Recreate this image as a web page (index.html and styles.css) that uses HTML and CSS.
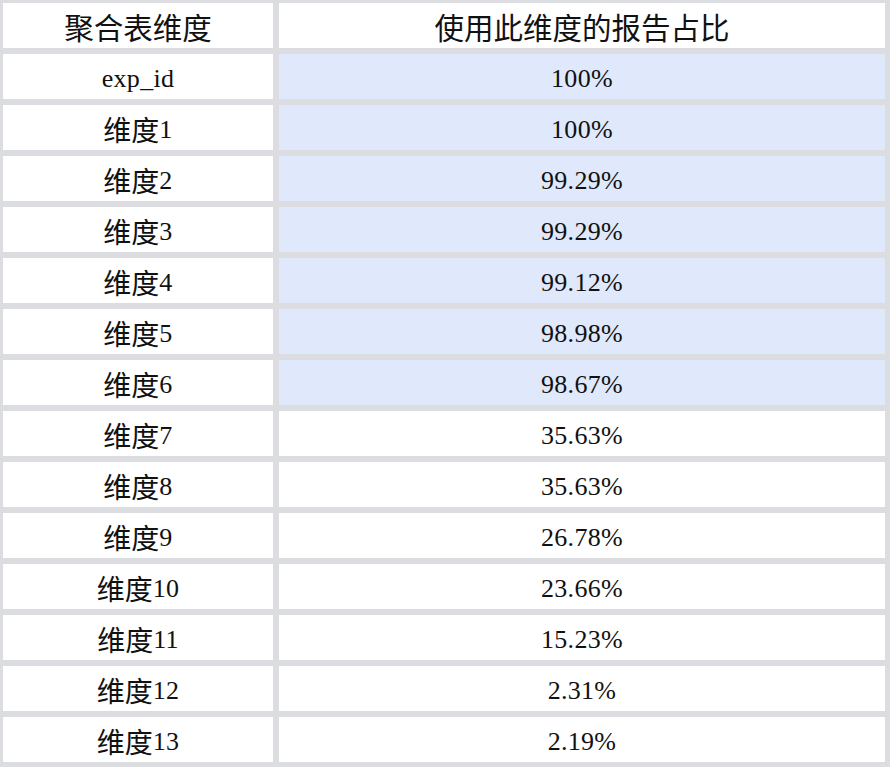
FILE: index.html
```html
<!DOCTYPE html>
<html lang="zh">
<head>
<meta charset="utf-8">
<title>聚合表维度</title>
<link rel="stylesheet" href="styles.css">
</head>
<body>
<div class="table">
  <div class="cell head"><span class="zh">聚合表维度</span></div><div class="cell head"><span class="zh">使用此维度的报告占比</span></div>
  <div class="cell">exp_id</div><div class="cell hl">100%</div>
  <div class="cell"><span class="zh">维度</span>1</div><div class="cell hl">100%</div>
  <div class="cell"><span class="zh">维度</span>2</div><div class="cell hl">99.29%</div>
  <div class="cell"><span class="zh">维度</span>3</div><div class="cell hl">99.29%</div>
  <div class="cell"><span class="zh">维度</span>4</div><div class="cell hl">99.12%</div>
  <div class="cell"><span class="zh">维度</span>5</div><div class="cell hl">98.98%</div>
  <div class="cell"><span class="zh">维度</span>6</div><div class="cell hl">98.67%</div>
  <div class="cell"><span class="zh">维度</span>7</div><div class="cell">35.63%</div>
  <div class="cell"><span class="zh">维度</span>8</div><div class="cell">35.63%</div>
  <div class="cell"><span class="zh">维度</span>9</div><div class="cell">26.78%</div>
  <div class="cell"><span class="zh">维度</span>10</div><div class="cell">23.66%</div>
  <div class="cell"><span class="zh">维度</span>11</div><div class="cell">15.23%</div>
  <div class="cell"><span class="zh">维度</span>12</div><div class="cell">2.31%</div>
  <div class="cell"><span class="zh">维度</span>13</div><div class="cell">2.19%</div>
</div>
</body>
</html>
```
FILE: styles.css
```css
html, body {
  margin: 0;
  padding: 0;
  background: #dcdde1;
}
.table {
  display: grid;
  grid-template-columns: 270px 606px;
  grid-auto-rows: 45px;
  column-gap: 6px;
  row-gap: 6px;
  padding: 3px 5px 5px 3px;
  width: 890px;
  height: 767px;
  box-sizing: border-box;
  background: #dcdde1;
  font-family: "Liberation Serif", "Noto Sans CJK SC", serif;
  font-size: 26px;
  color: #111;
}
.cell {
  background: #ffffff;
  text-align: center;
  box-sizing: border-box;
  height: 45px;
  padding-top: 5px;
  line-height: 40px;
  white-space: nowrap;
  letter-spacing: 0.3px;
}
.cell.hl {
  background: #e0e8fb;
}
.zh {
  font-family: "Noto Sans CJK SC", sans-serif;
  font-size: 28px;
  line-height: 1;
  letter-spacing: 0;
  vertical-align: -3px;
}
.head .zh {
  font-size: 29.5px;
}
```
